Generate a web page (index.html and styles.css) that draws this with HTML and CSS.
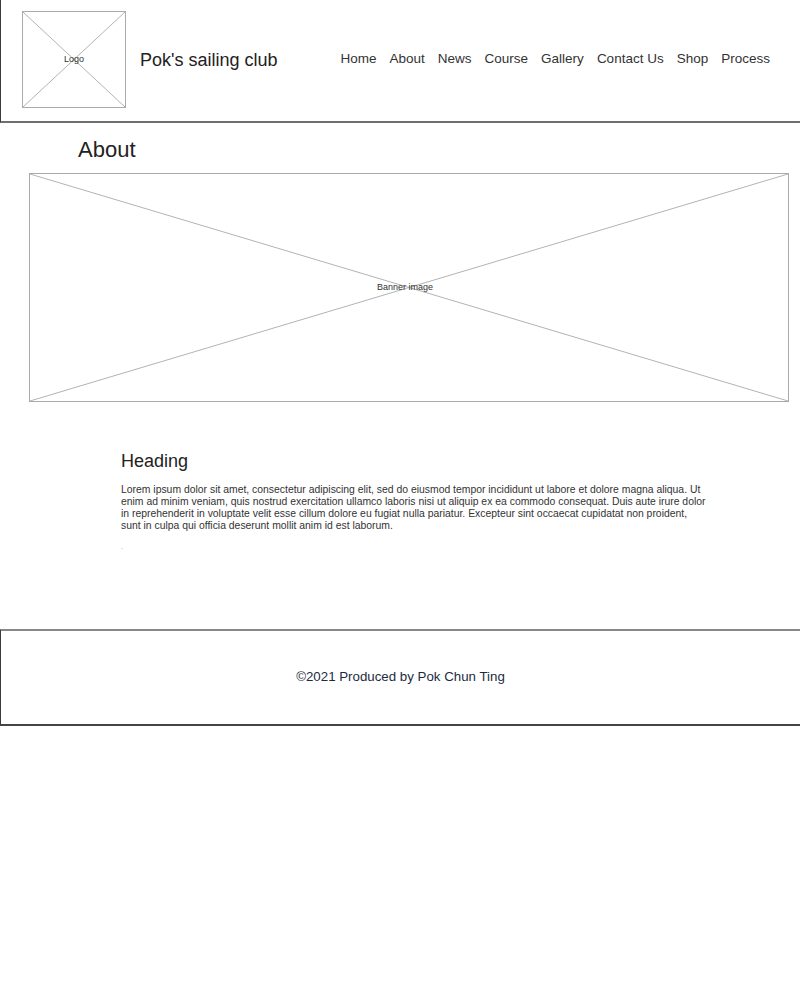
FILE: index.html
```html
<!DOCTYPE html>
<html>
<head>
<meta charset="utf-8">
<link rel="stylesheet" href="styles.css">
</head>
<body>
<header class="site-header">
  <div class="logo">
    <svg class="ph" viewBox="0 0 104 97" preserveAspectRatio="none">
      <line x1="0" y1="0" x2="104" y2="97"/>
      <line x1="104" y1="0" x2="0" y2="97"/>
    </svg>
    <span class="ph-label">Logo</span>
  </div>
  <div class="site-title">Pok's sailing club</div>
  <nav class="nav">
    <a>Home</a><a>About</a><a>News</a><a>Course</a><a>Gallery</a><a>Contact Us</a><a>Shop</a><a>Process</a>
  </nav>
</header>
<main class="main">
  <h1 class="page-title">About</h1>
  <div class="banner">
    <svg class="ph" viewBox="0 0 760 229" preserveAspectRatio="none">
      <line x1="0" y1="0" x2="760" y2="229"/>
      <line x1="760" y1="0" x2="0" y2="229"/>
    </svg>
    <span class="ph-label banner-label">Banner image</span>
  </div>
  <section class="content">
    <h2 class="heading">Heading</h2>
    <p class="text">Lorem ipsum dolor sit amet, consectetur adipiscing elit, sed do eiusmod tempor incididunt ut labore et dolore magna aliqua. Ut enim ad minim veniam, quis nostrud exercitation ullamco laboris nisi ut aliquip ex ea commodo consequat. Duis aute irure dolor in reprehenderit in voluptate velit esse cillum dolore eu fugiat nulla pariatur. Excepteur sint occaecat cupidatat non proident, sunt in culpa qui officia deserunt mollit anim id est laborum.</p>
    <p class="dot">.</p>
  </section>
</main>
<footer class="site-footer">©2021 Produced by Pok Chun Ting</footer>
</body>
</html>
```
FILE: styles.css
```css
html, body {
  margin: 0;
  padding: 0;
  background: #fff;
  font-family: "Liberation Sans", Arial, sans-serif;
  color: #222;
}
.site-header {
  box-sizing: border-box;
  height: 123px;
  border-left: 1px solid #3a3a3a;
  border-bottom: 2px solid #6f6f6f;
  display: flex;
  align-items: flex-start;
}
.logo {
  position: relative;
  box-sizing: border-box;
  width: 104px;
  height: 97px;
  margin: 11px 0 0 21px;
  border: 1px solid #aaa;
}
.ph {
  position: absolute;
  inset: 0;
  width: 100%;
  height: 100%;
}
.ph line {
  stroke: #b3b3b3;
  stroke-width: 1;
  vector-effect: non-scaling-stroke;
}
.ph-label {
  position: absolute;
  left: 0;
  right: 0;
  top: 50%;
  transform: translateY(-50%);
  margin-top: -1px;
  text-align: center;
  font-size: 9px;
  color: #333;
}
.banner-label {
  right: 8px;
}
.site-title {
  margin: 50px 0 0 14px;
  font-size: 18px;
  color: #222;
  white-space: nowrap;
}
.nav {
  display: flex;
  gap: 13px;
  margin: 51px 0 0 63px;
  font-size: 13.5px;
  color: #333;
  white-space: nowrap;
}
.main {
  padding-top: 14px;
}
.page-title {
  margin: 0 0 10px 78px;
  font-size: 22px;
  font-weight: normal;
  line-height: 26px;
  color: #222;
}
.banner {
  position: relative;
  box-sizing: border-box;
  width: 760px;
  height: 229px;
  margin-left: 29px;
  border: 1px solid #aaa;
}
.content {
  width: 585px;
  margin: 48px 0 0 121px;
  height: 179px;
}
.heading {
  margin: 0 0 12px;
  font-size: 18px;
  font-weight: normal;
  line-height: 22px;
  color: #222;
}
.text {
  margin: 0;
  font-size: 10.4px;
  line-height: 12px;
  color: #333;
}
.dot {
  margin: 10px 0 0;
  font-size: 8px;
  line-height: 10px;
  color: #999;
}
.site-footer {
  box-sizing: border-box;
  height: 97px;
  border-top: 2px solid #888;
  border-left: 1px solid #3a3a3a;
  border-bottom: 2px solid #444;
  display: flex;
  align-items: center;
  justify-content: center;
  padding-bottom: 2px;
  font-size: 13.3px;
  color: #1c2c40;
}
```
